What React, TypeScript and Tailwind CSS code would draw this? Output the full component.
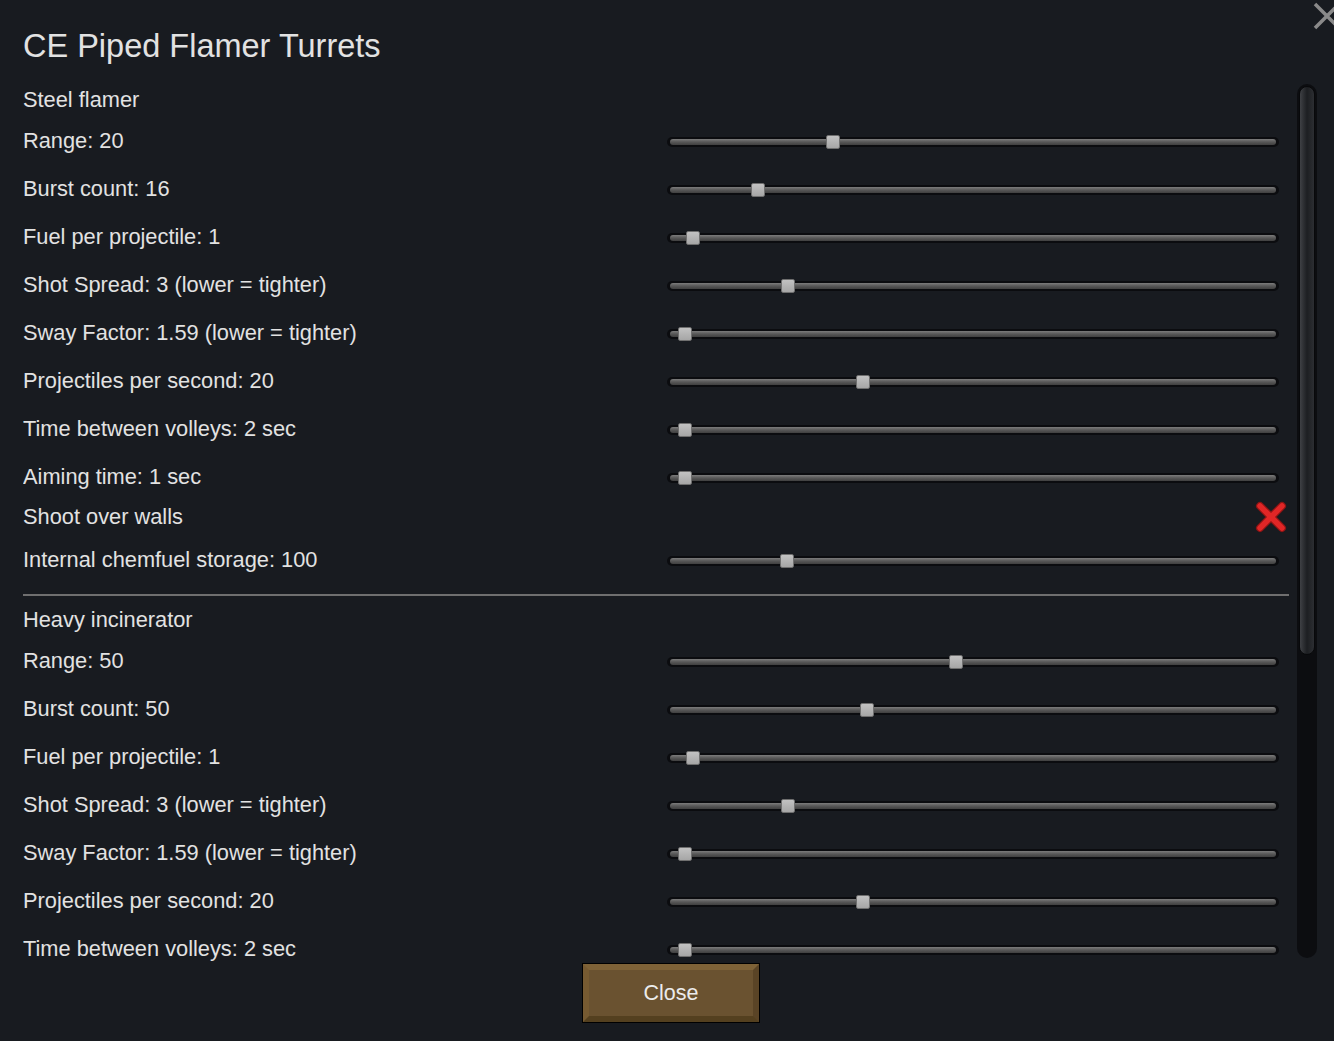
import React from 'react';

type Row =
    | { kind: 'slider'; label: string; thumb: number }
    | { kind: 'check'; label: string };

interface Section {
    title: string;
    rows: Row[];
}

// thumb = centre x of the handle in page pixels
const sections: Section[] = [
    {
        title: 'Steel flamer',
        rows: [
            { kind: 'slider', label: 'Range: 20', thumb: 833 },
            { kind: 'slider', label: 'Burst count: 16', thumb: 758 },
            { kind: 'slider', label: 'Fuel per projectile: 1', thumb: 693 },
            { kind: 'slider', label: 'Shot Spread: 3 (lower = tighter)', thumb: 788 },
            { kind: 'slider', label: 'Sway Factor: 1.59 (lower = tighter)', thumb: 685 },
            { kind: 'slider', label: 'Projectiles per second: 20', thumb: 863 },
            { kind: 'slider', label: 'Time between volleys: 2 sec', thumb: 685 },
            { kind: 'slider', label: 'Aiming time: 1 sec', thumb: 685 },
            { kind: 'check', label: 'Shoot over walls' },
            { kind: 'slider', label: 'Internal chemfuel storage: 100', thumb: 787 },
        ],
    },
    {
        title: 'Heavy incinerator',
        rows: [
            { kind: 'slider', label: 'Range: 50', thumb: 956 },
            { kind: 'slider', label: 'Burst count: 50', thumb: 867 },
            { kind: 'slider', label: 'Fuel per projectile: 1', thumb: 693 },
            { kind: 'slider', label: 'Shot Spread: 3 (lower = tighter)', thumb: 788 },
            { kind: 'slider', label: 'Sway Factor: 1.59 (lower = tighter)', thumb: 685 },
            { kind: 'slider', label: 'Projectiles per second: 20', thumb: 863 },
            { kind: 'slider', label: 'Time between volleys: 2 sec', thumb: 685 },
        ],
    },
];

const TRACK_LEFT = 667;

function Slider({ thumb }: { thumb: number }) {
    return (
        <div className="relative mt-[6px] h-[10px] w-[612px] rounded-full bg-[#0b0c0f]">
            <div className="absolute left-[3px] right-[3px] top-[2px] h-[6px] rounded-full bg-gradient-to-b from-[#7c7c7c] via-[#575757] to-[#404040]" />
            <div
                className="absolute top-[-2px] h-[14px] w-[14px] rounded-[2px] border border-[#6f6f6f] bg-gradient-to-b from-[#c2c2c2] to-[#a6a6a6]"
                style={{ left: thumb - TRACK_LEFT - 7 }}
            />
        </div>
    );
}

function RedCross() {
    return (
        <svg width="32" height="32" viewBox="0 0 32 32" className="mr-[2px]">
            <path d="M5 5 L27 27 M27 5 L5 27" stroke="#8c1414" strokeWidth="8" strokeLinecap="round" />
            <path d="M5 5 L27 27 M27 5 L5 27" stroke="#e02626" strokeWidth="5.5" strokeLinecap="round" />
        </svg>
    );
}

function SectionBlock({ section }: { section: Section }) {
    return (
        <div>
            <div className="flex h-[31px] items-center">{section.title}</div>
            {section.rows.map((r, i) =>
                r.kind === 'slider' ? (
                    <div key={i} className="flex h-[48px] items-center">
                        <div className="w-[644px] pt-[3px]">{r.label}</div>
                        <Slider thumb={r.thumb} />
                    </div>
                ) : (
                    <div key={i} className="flex h-[35px] items-center justify-between">
                        <div className="pt-[1px]">{r.label}</div>
                        <RedCross />
                    </div>
                )
            )}
        </div>
    );
}

export default function App() {
    return (
        <div
            className="relative h-[1041px] w-[1334px] overflow-hidden bg-[#181b20] text-[#e2e2e2]"
            style={{ fontFamily: '"Liberation Sans", Arial, sans-serif' }}
        >
            {/* window close */}
            <svg width="28" height="28" viewBox="0 0 28 28" className="absolute right-[-7px] top-[2px]">
                <path d="M2 2 L26 26 M26 2 L2 26" stroke="#8a8a8a" strokeWidth="3.5" />
            </svg>

            <div className="h-[84px] pl-[23px] pt-[30px] text-[32.5px] leading-none">CE Piped Flamer Turrets</div>

            <div className="flex items-start pl-[23px]">
                <div className="h-[879px] w-[1266px] overflow-hidden text-[21.8px] leading-none">
                    <SectionBlock section={sections[0]} />
                    <div className="mb-[8px] mt-[12px] h-[2px] bg-[#6f6f6f]" />
                    <SectionBlock section={sections[1]} />
                </div>
                <div className="ml-[8px] h-[874px] w-[20px] rounded-full bg-[#0c0d10] p-[2px]">
                    <div className="h-[569px] rounded-full border border-[#08090b] bg-gradient-to-r from-[#3f4145] via-[#1d1f22] to-[#2c2e32]" />
                </div>
            </div>

            <div className="ml-[582px] w-[178px] bg-black p-px">
                <div className="flex h-[58px] items-center justify-center border-[6px] border-b-[#54401f] border-l-[#765a31] border-r-[#5a4426] border-t-[#7e6237] bg-[#6a5230] text-[21.5px] text-[#ececec]">
                    Close
                </div>
            </div>
        </div>
    );
}
